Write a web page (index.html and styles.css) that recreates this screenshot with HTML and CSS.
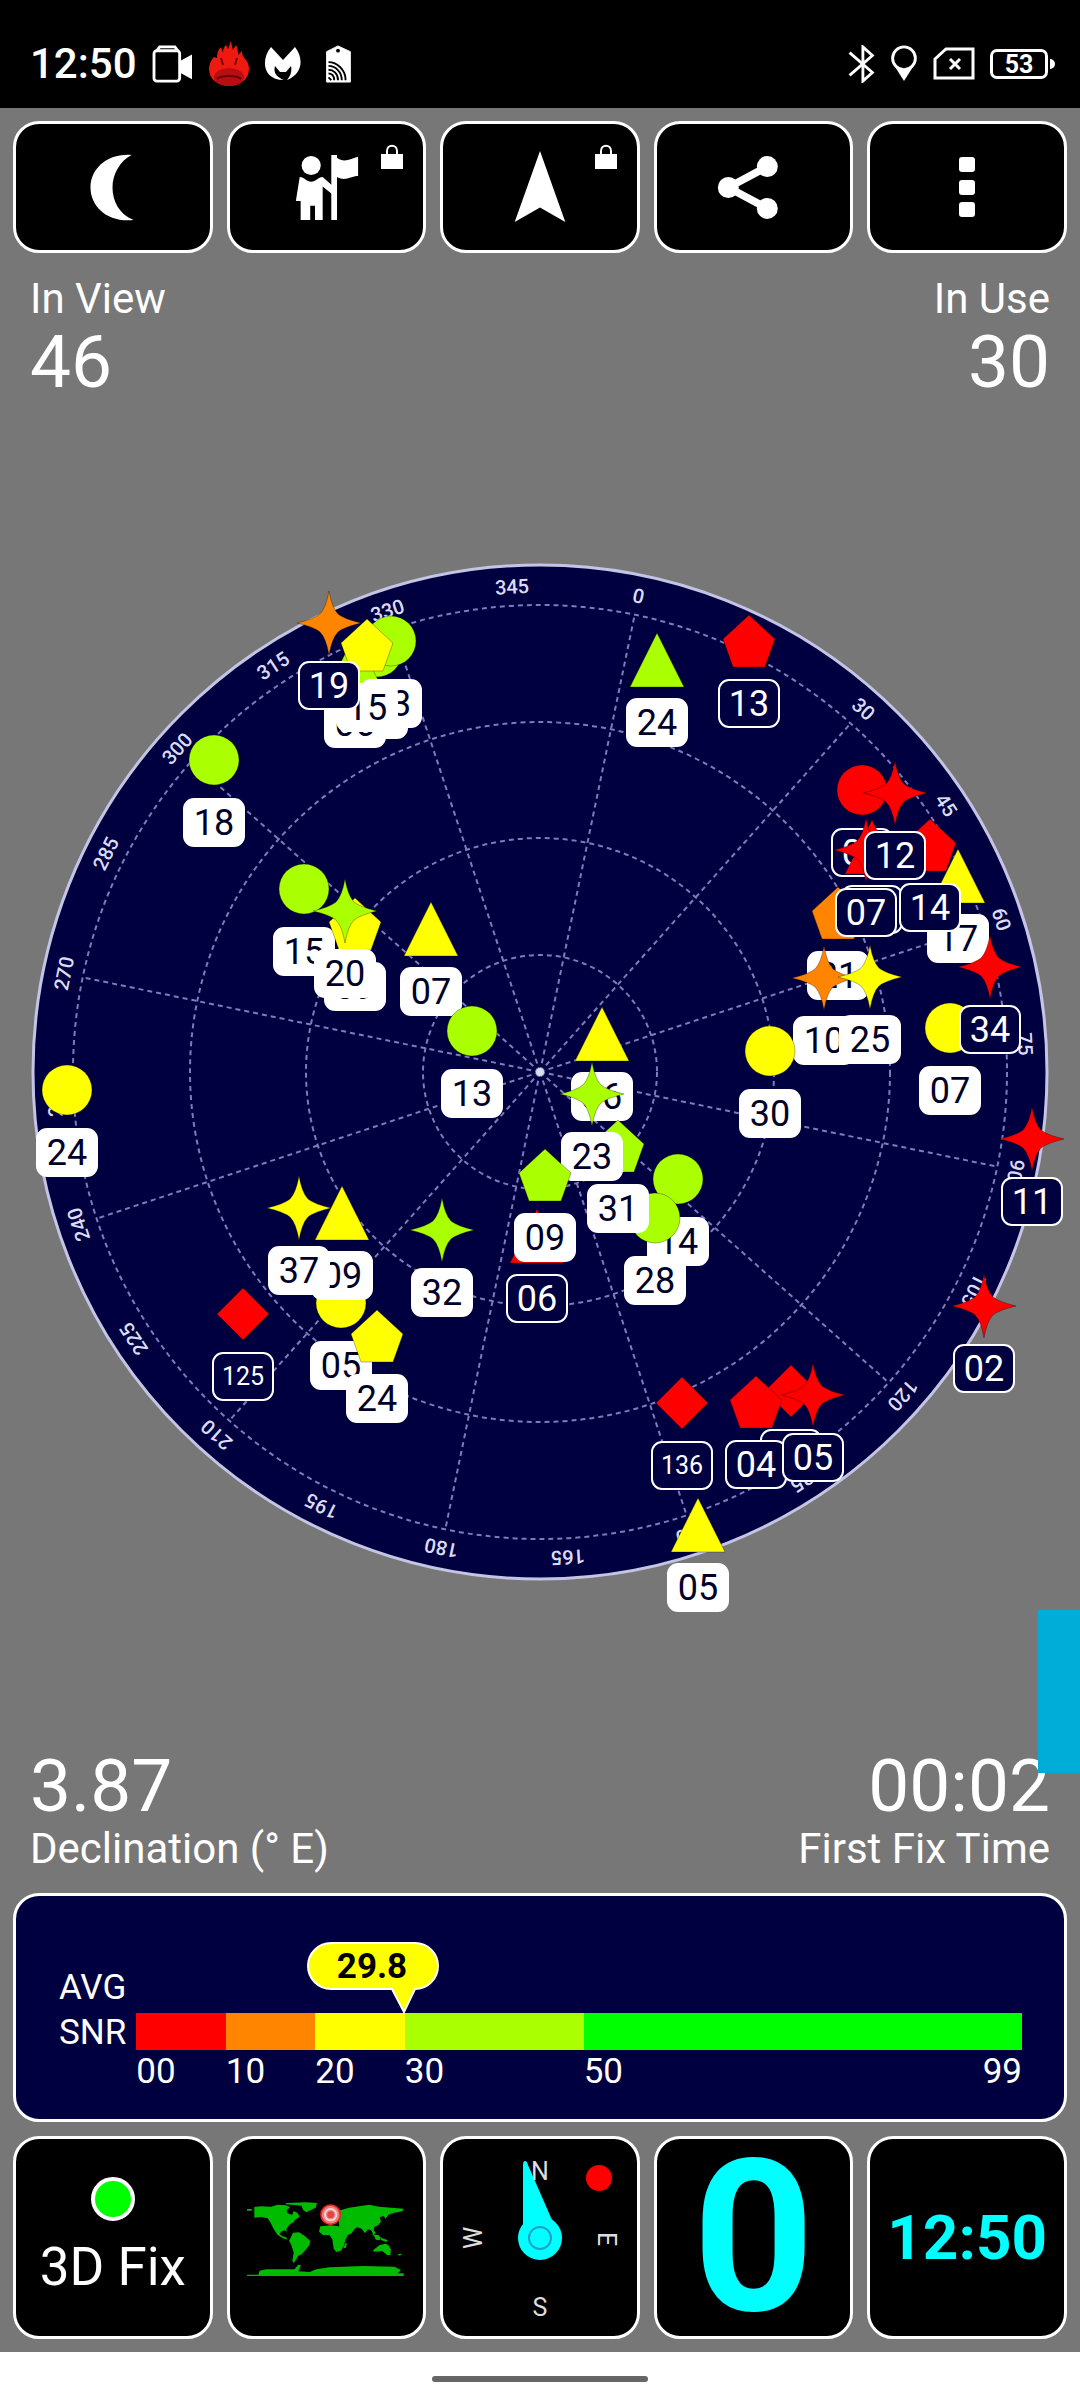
FILE: index.html
```
<!DOCTYPE html>
<html lang="en">
<head>
    <meta charset="UTF-8">
    <meta name="viewport" content="width=device-width, initial-scale=1.0">
    <title>GPS Signal</title>
    <link rel="stylesheet" href="styles.css">
</head>
<body>
    <header class="status-bar">
        <div class="status-group">
            <span class="status-time">12:50</span>
            <svg width="42" height="38" viewBox="0 0 42 40">
                <rect x="1" y="6" width="27" height="32" rx="3" fill="none" stroke="#fff" stroke-width="3"/>
                <path d="M4 6l3-4h16l3 4" fill="none" stroke="#fff" stroke-width="3"/>
                <path d="M28 17l13-7v26l-13-7z" fill="#fff"/>
            </svg>
            <svg width="40" height="46" viewBox="0 0 40 46">
                <path d="M21 0c2 3 2 6 3 9l3-5c2 4 2 7 2 10l4-4c0 4 1 5 3 8 2 2 4 5 4 10 0 10-9 17-20 17S0 38 0 28c0-5 2-9 5-12l3 1c0-5 1-8 4-11l2 6c0-4 1-6 3-8l2 4c1-2 2-5 2-8z" fill="#f0190f"/>
                <ellipse cx="20" cy="36" rx="15" ry="9" fill="#b80d12"/>
                <path d="M8 38c4-4 20-4 24 0M12 17l2 7M28 17l-2 7" fill="none" stroke="#6c0508" stroke-width="2"/>
            </svg>
            <svg width="38" height="34" viewBox="0 0 38 34">
                <path d="M7 0l12 13L31 0c8 10 9 26-8 33 4-5 5-9 4-14l-5 6h-6l-5-6c-2 7 2 11 9 14C-2 33-3 12 7 0z" fill="#fff"/>
            </svg>
            <svg width="42" height="38" viewBox="0 0 42 40">
                <path d="M9 7l12-6 13 6v32H9z" fill="#fff" stroke="#fff" stroke-linejoin="round"/>
                <circle cx="21" cy="6" r="2"/>
                <path d="M11 18c9 0 18 8 18 19M11 22c7 0 14 6 14 15M11 26c5 0 10 4 10 11M11 30c3 0 6 2 6 7M11 34l3 3" fill="none" stroke="#000" stroke-width="2"/>
            </svg>
        </div>
        <div class="status-group">
            <svg width="28" height="38" viewBox="0 0 28 40">
                <path d="M2 8l24 21-10 9V2l10 9L2 32" fill="none" stroke="#fff" stroke-width="3"/>
            </svg>
            <svg width="28" height="38" viewBox="0 0 28 40">
                <circle cx="14" cy="14" r="12" fill="none" stroke="#fff" stroke-width="3"/>
                <path d="M4 22c6 6 14 6 20 0L14 38z" fill="#fff"/>
            </svg>
            <svg width="42" height="34" viewBox="0 0 42 34">
                <path d="M2 12L13 2h27v29H2zM17 12l10 10M27 12L17 22" fill="none" stroke="#fff" stroke-width="3"/>
            </svg>
            <span class="battery">53</span>
        </div>
    </header>

    <main class="screen">
        <nav class="toolbar">
            <button class="tool" aria-label="Night mode">
                <svg width="67" height="67" viewBox="0 0 70 70"><path d="M55 1C30-1 12 15 12 35s18 37 45 34C42 63 35 49 35 35 35 21 43 7 55 1z"/></svg>
            </button>
            <button class="tool" aria-label="Guide">
                <svg width="67" height="67" viewBox="0 0 70 70">
                    <circle cx="19" cy="12" r="10"/>
                    <path d="M7 24c5 0 7 5 12 5s7-5 12-5l10 9v9l-10-8v35h-8V54h-5v15H8V49H3z"/>
                    <path d="M40 1h6v3c7 6 15 1 22-1v20c-8 0-13 6-22 1v45h-6z"/>
                </svg>
                <svg class="lock" width="22" height="26" viewBox="0 0 22 26"><path d="M0 10h22v15H0z"/><path d="M6 11V7c0-7 10-7 10 0v4" fill="none" stroke="#fff" stroke-width="2"/></svg>
            </button>
            <button class="tool" aria-label="Navigate">
                <svg width="54" height="72" viewBox="0 0 54 74"><path d="M27 0l26 73-26-15L1 73z"/></svg>
                <svg class="lock" width="22" height="26" viewBox="0 0 22 26"><path d="M0 10h22v15H0z"/><path d="M6 11V7c0-7 10-7 10 0v4" fill="none" stroke="#fff" stroke-width="2"/></svg>
            </button>
            <button class="tool" aria-label="Share">
                <svg width="78" height="67" viewBox="0 0 82 70">
                    <path d="M55 13L14 35l41 22" fill="none" stroke="#fff" stroke-width="8"/>
                    <circle cx="14" cy="35" r="11"/><circle cx="55" cy="13" r="11"/><circle cx="55" cy="57" r="11"/>
                </svg>
            </button>
            <button class="tool" aria-label="More">
                <svg width="16" height="60" viewBox="0 0 16 60">
                    <rect width="16" height="15" rx="3"/><rect y="23" width="16" height="15" rx="3"/><rect y="45" width="16" height="15" rx="3"/>
                </svg>
            </button>
        </nav>

        <section class="stats">
            <div class="stat">
                <p class="stat-label">In View</p>
                <p class="stat-value">46</p>
            </div>
            <div class="stat stat-right">
                <p class="stat-label">In Use</p>
                <p class="stat-value">30</p>
            </div>
        </section>

        <section class="sky">
            <svg class="sky-plot" id="skyPlot" viewBox="0 0 1080 1144">
                <defs>
                    <circle id="circle" r="25"/>
                    <path id="triangle" d="M0-27L27 27H-27z"/>
                    <path id="pentagon" d="M0-26L26-2 16 26H-16L-26-2z"/>
                    <path id="diamond" d="M0-26L26 0 0 26-26 0z"/>
                    <path id="star" d="M0-32Q3-15 9-9 15-4 32 0 15 4 9 9 3 15 0 32-3 15-9 9-15 4-32 0-15-4-9-9-3-15 0-32z"/>
                </defs>
                <circle class="sky-disc" cx="540" cy="572" r="507"/>
                <g class="grid" id="grid">
                    <circle cx="540" cy="572" r="117"/>
                    <circle cx="540" cy="572" r="234"/>
                    <circle cx="540" cy="572" r="350"/>
                    <circle cx="540" cy="572" r="467"/>
                </g>
                <circle cx="540" cy="572" r="4" fill="#dde"/>
                <g class="bearings" id="bearings"></g>
                <g id="satellites"></g>
            </svg>
        </section>

        <section class="stats">
            <div class="stat">
                <p class="stat-value">3.87</p>
                <p class="stat-label">Declination (° E)</p>
            </div>
            <div class="stat stat-right">
                <p class="stat-value">00:02</p>
                <p class="stat-label">First Fix Time</p>
            </div>
            <div class="drawer-handle"></div>
        </section>

        <section class="snr-panel">
            <div class="snr-title">AVG<br>SNR</div>
            <div class="snr-scale">
                <div class="snr-bar">
                    <span class="band w10 red"></span>
                    <span class="band w10 orange"></span>
                    <span class="band w10 yellow"></span>
                    <span class="band w20 lime"></span>
                    <span class="band w49 green"></span>
                </div>
                <div class="snr-ticks">
                    <span class="w10">00</span>
                    <span class="w10">10</span>
                    <span class="w10">20</span>
                    <span class="w20">30</span>
                    <span class="w49 last-tick"><span>50</span><span>99</span></span>
                </div>
                <svg class="snr-bubble" width="132" height="72" viewBox="0 0 132 72" style="left: 30.1%">
                    <path d="M24 1h84a23 23 0 0 1 0 46L97 70 85 47H24a23 23 0 0 1 0-46z"/>
                    <text x="65" y="36">29.8</text>
                </svg>
            </div>
        </section>

        <nav class="tiles">
            <button class="tile">
                <span class="fix-dot"></span>
                <span class="fix-text">3D Fix</span>
            </button>
            <button class="tile" aria-label="World map">
                <svg width="160" height="78" viewBox="35 56 480 234">
                    <g fill="#0b0">
                        <path d="M38 86h14v5H38zM60 80l20-2 30 1 20-6 25 2 12 6-10 8 2 9 14 6 5-12 12 6 6 12-14 8-4 8-12 6-10 14 2 8-8-4-10 4-4 8 8 6 10 2 6 8-14-4-16-10-12-18-10-20-8-12-20-4-20 2z"/>
                        <path d="M155 68l60-2 33 2-4 14-16 8-12 6-10-8-4-12-47-4z"/>
                        <path d="M176 157l18-1 18 12 16 14-4 14-10 12-12 14-10 4-8 14-6 8-4-6 4-26-8-24-6-10z"/>
                        <path d="M258 138l30-3 38 4 6 12 12 6-10 20-6 20-8 14-14 4-8-10-4-28-8-12-20-1-12-10z"/>
                        <path d="M310 92l34-10 30-4 30-5 30 6 74 6-4 8-24 4-18 6-8 12-6-8-12 4 4 12-8 12-12 4-2 10 6 10-6 6-8-16-10-2-8 12-10-14-14-4-8 6-8 12-12 6-10-14-14-2z"/>
                        <path d="M333 187l5 3-4 14-6-2zM410 160l10 8 4 10 12 2 4-8-8-8-12 0zM440 172l20 8-4 5-16-6zM418 208l18-14 18-4 8 4 8 14-2 16-10 0-14-12-22 2-6-2zM488 222l16-2-8 6z"/>
                        <path d="M38 283h34l4-12 20-4h84l12-14 8 2-8 18 34 2 20-8 40-6 100-4 94 2 20 10-10 10h18v8H38z"/>
                    </g>
                    <circle cx="289" cy="103" r="29" fill="#ef7f7f" stroke="#e22" stroke-width="5"/>
                    <circle cx="289" cy="103" r="17" fill="none" stroke="#fbd0d0" stroke-width="6"/>
                    <circle cx="289" cy="103" r="10" fill="#d44"/>
                </svg>
            </button>
            <button class="tile" aria-label="Compass">
                <svg width="180" height="190" viewBox="0 2 180 190">
                    <path d="M73 24q0-4 2-4t3 4l24 55-29 8z" fill="#0ff"/>
                    <circle cx="90" cy="97" r="22" fill="#0ff"/>
                    <circle cx="90" cy="97" r="11" fill="none" stroke="#1ba3c9" stroke-width="2"/>
                    <circle cx="149" cy="37" r="13" fill="#f00"/>
                    <g class="compass-text">
                        <text x="90" y="39">N</text>
                        <text x="90" y="175">S</text>
                        <text transform="translate(32 97) rotate(-90)">W</text>
                        <text transform="translate(148 98) rotate(90)">E</text>
                    </g>
                </svg>
            </button>
            <button class="tile tile-speed">0</button>
            <button class="tile tile-clock">12:50</button>
        </nav>
    </main>

    <footer class="gesture-bar"><span class="gesture-pill"></span></footer>

    <script>
        const CX = 540, CY = 572, HEADING = 11.7;

        // [shape, colour, x, y, id, used in fix]
        const satellites = [
            ["circle", "lime", 377, 152, "08", 1],
            ["triangle", "lime", 355, 161, "06", 1],
            ["circle", "lime", 391, 141, "03", 1],
            ["pentagon", "yellow", 367, 145, "15", 1],
            ["star", "orange", 329, 123, "19", 0],
            ["circle", "lime", 214, 260, "18", 1],
            ["circle", "lime", 304, 389, "15", 1],
            ["pentagon", "yellow", 355, 424, "09", 1],
            ["star", "lime", 345, 411, "20", 1],
            ["triangle", "yellow", 431, 429, "07", 1],
            ["circle", "lime", 472, 531, "13", 1],
            ["circle", "yellow", 67, 590, "24", 1],
            ["triangle", "lime", 657, 160, "24", 1],
            ["pentagon", "red", 749, 141, "13", 0],
            ["pentagon", "orange", 838, 413, "21", 1],
            ["circle", "red", 862, 290, "08", 0],
            ["triangle", "red", 872, 347, "04", 0],
            ["star", "red", 866, 350, "07", 0],
            ["triangle", "yellow", 958, 376, "17", 1],
            ["pentagon", "red", 930, 345, "14", 0],
            ["star", "red", 895, 293, "12", 0],
            ["circle", "yellow", 950, 528, "07", 1],
            ["star", "red", 990, 467, "34", 0],
            ["star", "orange", 824, 478, "10", 1],
            ["star", "yellow", 870, 477, "25", 1],
            ["circle", "yellow", 770, 551, "30", 1],
            ["triangle", "yellow", 602, 534, "36", 1],
            ["circle", "lime", 678, 679, "14", 1],
            ["circle", "lime", 655, 718, "28", 1],
            ["pentagon", "lime", 618, 646, "31", 1],
            ["star", "lime", 592, 594, "23", 1],
            ["triangle", "red", 537, 736, "06", 0],
            ["pentagon", "lime", 545, 675, "09", 1],
            ["circle", "yellow", 341, 803, "05", 1],
            ["triangle", "yellow", 342, 713, "09", 1],
            ["star", "yellow", 299, 708, "37", 1],
            ["pentagon", "yellow", 377, 836, "24", 1],
            ["star", "lime", 442, 730, "32", 1],
            ["diamond", "red", 243, 814, "125", 0],
            ["diamond", "red", 682, 903, "136", 0],
            ["diamond", "red", 791, 891, "123", 0],
            ["pentagon", "red", 756, 902, "04", 0],
            ["star", "red", 813, 895, "05", 0],
            ["star", "red", 1032, 639, "11", 0],
            ["star", "red", 984, 806, "02", 0],
            ["triangle", "yellow", 698, 1025, "05", 1]
        ];

        let spokes = "", bearings = "", sats = "";

        for (let deg = 0; deg < 360; deg += 15) {
            const turn = `rotate(${deg + HEADING} ${CX} ${CY})`;
            if (deg % 30 === 0) {
                spokes += `<line x1="${CX}" y1="${CY}" x2="${CX}" y2="${CY - 467}" transform="${turn}"/>`;
            }
            bearings += `<text x="${CX}" y="${CY - 479}" transform="${turn}">${deg}</text>`;
        }

        for (const [shape, colour, x, y, id, used] of satellites) {
            sats += `<g class="sat ${used ? "used" : "unused"}" transform="translate(${x} ${y})">
                <use href="#${shape}" class="mark ${colour}"/>
                <rect class="tag" x="-30" y="39" width="60" height="47" rx="10"/>
                <text class="${id.length > 2 ? "tag-small" : "tag-text"}" y="${id.length > 2 ? 71 : 75}">${id}</text>
            </g>`;
        }

        document.getElementById("grid").innerHTML += spokes;
        document.getElementById("bearings").innerHTML = bearings;
        document.getElementById("satellites").innerHTML = sats;
    </script>
</body>
</html>
```
FILE: styles.css
```
* {
    box-sizing: border-box;
}
body {
    font-family: Roboto, "Liberation Sans", sans-serif;
    display: flex;
    flex-direction: column;
    min-height: 100vh;
    margin: 0;
    background-color: #777;
    color: #fff;
}
p {
    margin: 0;
}
button {
    font-family: inherit;
    color: inherit;
    padding: 0;
}
svg {
    display: block;
}

/* status bar */
.status-bar {
    display: flex;
    justify-content: space-between;
    align-items: center;
    height: 108px;
    padding: 20px 24px 0 30px;
    background-color: #000;
}
.status-group {
    display: flex;
    align-items: center;
    gap: 15px;
}
.status-time {
    font-size: 42px;
    font-weight: 500;
    line-height: 48px;
}
.battery {
    position: relative;
    width: 58px;
    height: 30px;
    margin-right: 8px;
    border: 3px solid #fff;
    border-radius: 7px;
    font-size: 25px;
    font-weight: 700;
    line-height: 25px;
    text-align: center;
}
.battery::after {
    content: "";
    position: absolute;
    right: -10px;
    top: 7px;
    width: 5px;
    height: 10px;
    border-radius: 0 5px 5px 0;
    background-color: #fff;
}

/* main screen */
.screen {
    display: flex;
    flex-direction: column;
    flex: 1;
    padding: 13px;
}
.toolbar, .tiles {
    display: flex;
    gap: 14px;
}
.tool, .tile {
    position: relative;
    display: flex;
    flex: 1;
    min-width: 0;
    justify-content: center;
    align-items: center;
    border: 3px solid #fff;
    border-radius: 26px;
    background-color: #000;
}
.tool {
    height: 132px;
    fill: #fff;
}
.lock {
    position: absolute;
    top: 20px;
    right: 20px;
}
.stats {
    position: relative;
    display: flex;
    justify-content: space-between;
    padding: 21px 17px 0;
}
.sky + .stats {
    padding: 0 17px 19px;
}
.stat-right {
    text-align: right;
}
.stat-label {
    font-size: 42px;
    line-height: 50px;
}
.stat-value {
    font-size: 73px;
    line-height: 76px;
}
.drawer-handle {
    position: absolute;
    right: -13px;
    bottom: 120px;
    width: 42px;
    height: 163px;
    background-color: #00acd8;
}

/* sky plot */
.sky {
    display: flex;
    flex: 1;
    align-items: center;
    margin: 0 -13px;
    padding-bottom: 4px;
}
.sky-plot {
    width: 100%;
}
.sky-disc {
    fill: #000040;
    stroke: #c4c4e4;
    stroke-width: 3px;
}
.grid {
    fill: none;
    stroke: #7c7cbc;
    stroke-width: 2px;
    stroke-dasharray: 5 4;
}
.bearings {
    fill: #dcdcf4;
    font-size: 20px;
    font-weight: 500;
    text-anchor: middle;
}
.mark {
    stroke: rgba(0, 0, 0, 0.3);
    stroke-width: 1px;
}
.mark.red { fill: #f00; }
.mark.orange { fill: #ff8500; }
.mark.yellow { fill: #ff0; }
.mark.lime { fill: #af0; }
.sat text {
    text-anchor: middle;
}
.tag {
    stroke: #fff;
    stroke-width: 2px;
}
.tag-text {
    font-size: 36px;
}
.tag-small {
    font-size: 25px;
}
.used .tag { fill: #fff; }
.used text { fill: #000028; }
.unused .tag { fill: #000040; }
.unused text { fill: #fff; }

/* average signal */
.snr-panel {
    display: flex;
    gap: 10px;
    margin-bottom: 14px;
    padding: 69px 42px 26px 43px;
    border: 3px solid #fff;
    border-radius: 26px;
    background-color: #000040;
    font-size: 35px;
}
.snr-title {
    line-height: 45px;
}
.snr-scale {
    position: relative;
    flex: 1;
    padding-top: 48px;
}
.snr-bar, .snr-ticks {
    display: flex;
}
.snr-bar {
    height: 37px;
}
.snr-ticks {
    line-height: 43px;
}
.w10 { flex: 10 1 0; min-width: 0; }
.w20 { flex: 20 1 0; min-width: 0; }
.w49 { flex: 49 1 0; min-width: 0; }
.band.red { background-color: #f00; }
.band.orange { background-color: #ff8500; }
.band.yellow { background-color: #ff0; }
.band.lime { background-color: #af0; }
.band.green { background-color: #0f0; }
.last-tick {
    display: flex;
    justify-content: space-between;
}
.snr-bubble {
    position: absolute;
    top: -23px;
    margin-left: -96px;
    fill: #ff0;
    stroke: #fff;
    stroke-width: 2px;
}
.snr-bubble text {
    fill: #000;
    stroke: none;
    font-size: 35px;
    font-weight: 700;
    text-anchor: middle;
}

/* bottom tiles */
.tile {
    height: 203px;
}
.tile:first-child {
    flex-direction: column;
    gap: 14px;
}
.fix-dot {
    width: 44px;
    height: 44px;
    border: 4px solid #fff;
    border-radius: 50%;
    background-color: #0f0;
}
.fix-text {
    font-size: 53px;
    line-height: 64px;
}
.compass-text {
    fill: #ddd;
    font-size: 25px;
    text-anchor: middle;
}
.tile-speed, .tile-clock {
    color: #0ff;
    font-weight: 700;
}
.tile-speed {
    font-size: 212px;
    line-height: 190px;
}
.tile-clock {
    font-size: 62px;
}

/* gesture bar */
.gesture-bar {
    display: flex;
    justify-content: center;
    align-items: center;
    height: 48px;
    padding-top: 6px;
    background-color: #fff;
}
.gesture-pill {
    width: 20%;
    height: 6px;
    border-radius: 3px;
    background-color: #666;
}
```
